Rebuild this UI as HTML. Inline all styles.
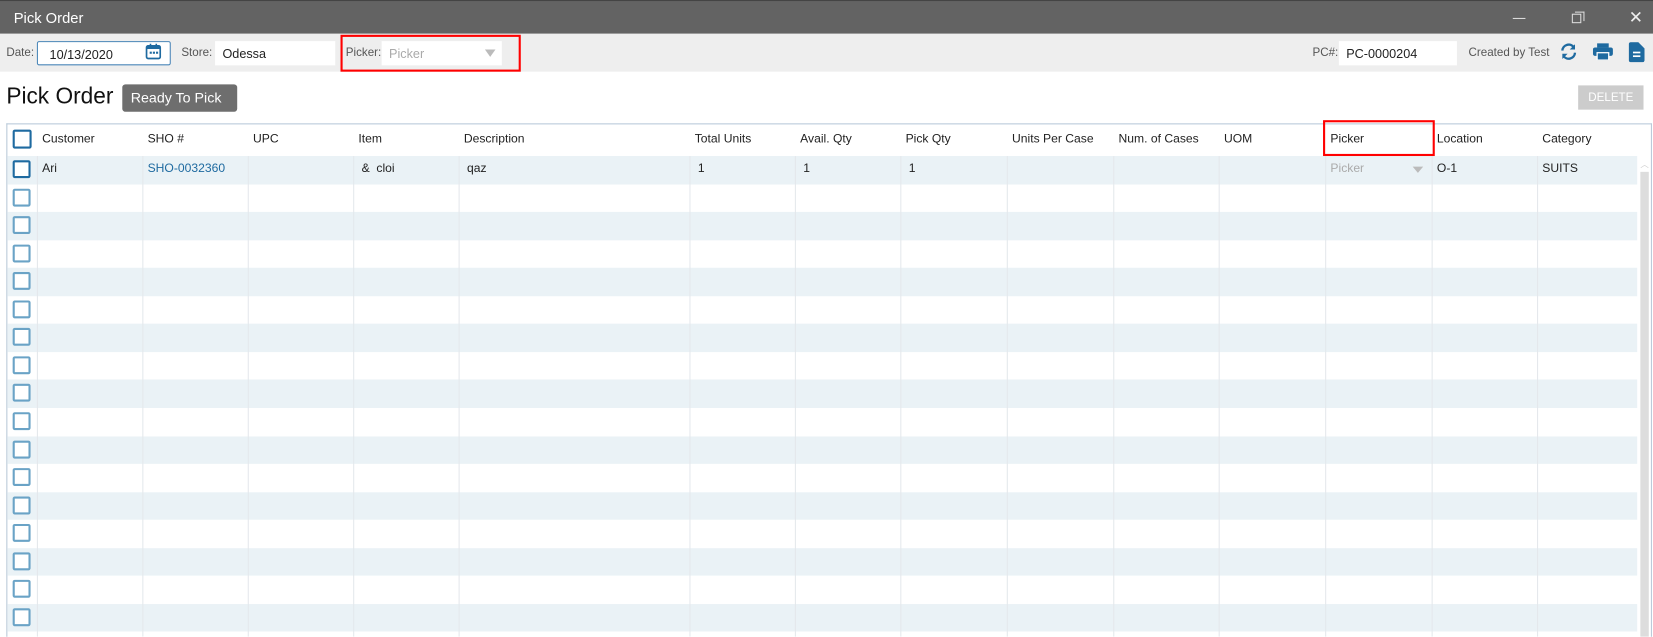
<!DOCTYPE html>
<html><head><meta charset="utf-8"><style>
*{box-sizing:border-box;margin:0;padding:0}
html,body{width:1653px;height:637px;overflow:hidden;background:#fff}
#w{position:absolute;left:0;top:0;width:1568px;height:604px;transform:scale(1.05421);transform-origin:0 0;font-family:"Liberation Sans",sans-serif;font-size:12px;color:#222;overflow:hidden}
.a{position:absolute}
.tb{left:0;top:0;width:1568px;height:32px;background:#636363;color:#fff;font-size:14px;border-top:1px solid #444}
.bar{left:0;top:32px;width:1568px;height:36px;background:#eeeeee}
.lbl{color:#555;font-size:11px}
.inp{background:#fff;height:23px;font-size:12px;padding:5px 7px;color:#222}
.cb{width:17px;height:17px;border:2px solid #6aa3c6;border-radius:2px;background:#fff}
.hcb{border-color:#1e6aa0}
.cell{font-size:11.5px}
</style></head><body><div id="w">
<div class="a tb"><span class="a" style="left:13px;top:8px">Pick Order</span>
<span class="a" style="left:1435px;top:16px;width:12px;height:1px;background:#ddd"></span>
<span class="a" style="left:1491px;top:12px;width:9px;height:9px;border:1px solid #ddd"></span>
<span class="a" style="left:1494px;top:10px;width:9px;height:9px;border-top:1px solid #ddd;border-right:1px solid #ddd"></span>
<span class="a" style="left:1545px;top:6px;font-size:16px;color:#eee">✕</span></div>
<div class="a bar"></div>
<span class="a lbl" style="left:6px;top:44px">Date:</span>
<div class="a inp" style="left:35px;top:39px;width:127px;border:1px solid #4a86b8;border-radius:2px;padding-left:11px">10/13/2020</div>
<svg class="a" style="left:138px;top:41px" width="15" height="16" viewBox="0 0 15 16"><rect x="1" y="2.5" width="13" height="12" rx="1.5" fill="none" stroke="#1e6aa0" stroke-width="1.6"/><rect x="1" y="2.5" width="13" height="3" fill="#1e6aa0"/><rect x="4" y="0.5" width="1.5" height="3" fill="#1e6aa0"/><rect x="9.5" y="0.5" width="1.5" height="3" fill="#1e6aa0"/><rect x="4" y="8" width="2" height="2" fill="#1e6aa0"/><rect x="7" y="8" width="2" height="2" fill="#1e6aa0"/><rect x="10" y="8" width="2" height="2" fill="#1e6aa0"/></svg>
<span class="a lbl" style="left:172px;top:44px">Store:</span>
<div class="a inp" style="left:204px;top:39px;width:114px">Odessa</div>
<div class="a" style="left:323px;top:33px;width:171px;height:35px;border:2px solid #f00"></div>
<span class="a lbl" style="left:328px;top:44px">Picker:</span>
<div class="a inp" style="left:362px;top:39px;width:114px;color:#aaa">Picker</div>
<span class="a" style="left:460px;top:47px;border-left:5px solid transparent;border-right:5px solid transparent;border-top:7px solid #bbb"></span>
<span class="a lbl" style="left:1245px;top:44px">PC#:</span>
<div class="a inp" style="left:1270px;top:39px;width:112px">PC-0000204</div>
<span class="a lbl" style="left:1393px;top:44px">Created by Test</span>
<svg class="a" style="left:1479px;top:41px" width="18" height="16" viewBox="0 0 18 16"><path d="M3 7a6 6 0 0 1 11-3" fill="none" stroke="#1e6aa0" stroke-width="2.2"/><path d="M15 1v5h-5z" fill="#1e6aa0"/><path d="M15 9a6 6 0 0 1-11 3" fill="none" stroke="#1e6aa0" stroke-width="2.2"/><path d="M3 15v-5h5z" fill="#1e6aa0"/></svg>
<svg class="a" style="left:1511px;top:41px" width="19" height="16" viewBox="0 0 19 16"><rect x="4" y="0" width="11" height="4" fill="#1e6aa0"/><rect x="0" y="4" width="19" height="8" rx="2" fill="#1e6aa0"/><rect x="4" y="9" width="11" height="7" fill="#1e6aa0" stroke="#fff" stroke-width="1.2"/></svg>
<svg class="a" style="left:1545px;top:40px" width="15" height="19" viewBox="0 0 15 19"><path d="M2 0h7l6 6v11a2 2 0 0 1-2 2H2a2 2 0 0 1-2-2V2a2 2 0 0 1 2-2z" fill="#1e6aa0"/><rect x="4" y="9" width="7" height="1.6" fill="#fff"/><rect x="4" y="12.5" width="7" height="1.6" fill="#fff"/></svg>
<span class="a" style="left:6px;top:79px;font-size:21.5px;color:#111">Pick Order</span>
<div class="a" style="left:116px;top:80px;width:109px;height:26px;background:#6e6e6e;border-radius:3px;color:#fff;font-size:13.5px;padding:5px 0 0 8px">Ready To Pick</div>
<div class="a" style="left:1497px;top:81px;width:62px;height:23px;background:#ccc;color:#fff;font-size:11px;text-align:center;padding-top:6px">DELETE</div>
<div class="a" style="left:6px;top:117px;width:1561px;height:500px;border:1px solid #b8c8d8;border-bottom:none"></div>
<div id="g"></div>
<div class="a" style="left:1255px;top:114px;width:106px;height:34px;border:2px solid #f00"></div>
<div class="a" style="left:1556px;top:163px;width:8px;height:441px;background:#ddd"></div>
<span class="a" style="left:1556px;top:151px;font-size:8px;color:#ccc">︿</span>
</div>
<script>
var cols=[35,135,235,335,435,654,754,854,955,1056,1156,1257,1358,1458,1553];
var hd=["Customer","SHO #","UPC","Item","Description","Total Units","Avail. Qty","Pick Qty","Units Per Case","Num. of Cases","UOM","Picker","Location","Category"];
var h="";
h+='<div class="a cb hcb" style="left:12px;top:123px;width:18px;height:18px"></div>';
for(var i=0;i<hd.length;i++)h+='<span class="a cell" style="left:'+(cols[i]+5)+'px;top:126px">'+hd[i]+'</span>';
for(var k=0;k<17;k++){var y=148+k*26.55;
 if(k%2==0)h+='<div class="a" style="left:7px;top:'+y+'px;width:1546px;height:26.5px;background:#eaf2f6"></div>';
 h+='<div class="a cb'+(k==0?' hcb':'')+'" style="left:12px;top:'+(y+4)+'px"></div>';}
for(var i=0;i<cols.length-1;i++)h+='<div class="a" style="left:'+cols[i]+'px;top:148px;width:1px;height:456px;background:#e4e8ec"></div>';
var r=["Ari","SHO-0032360","","&amp;&nbsp; cloi","qaz","1","1","1","","","","Picker","O-1","SUITS"];
for(var i=0;i<r.length;i++)if(r[i])h+='<span class="a cell" style="left:'+(cols[i]+(i==3||i==4?8:5)+(i==5||i==6||i==7?3:0))+'px;top:154px;color:'+(i==1?'#1e6aa0':i==11?'#aaa':'#222')+'">'+r[i]+'</span>';
h+='<span class="a" style="left:1340px;top:158px;border-left:5px solid transparent;border-right:5px solid transparent;border-top:6px solid #bbb"></span>';
document.getElementById("g").innerHTML=h;
</script>
</body></html>
